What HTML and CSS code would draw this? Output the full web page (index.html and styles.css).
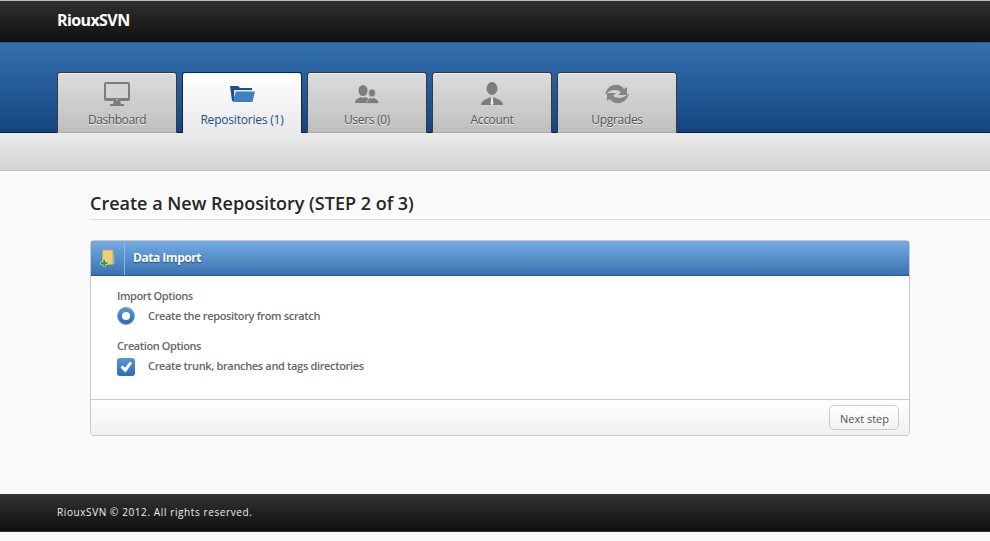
FILE: index.html
```html
<!DOCTYPE html>
<html lang="en">
<head>
<meta charset="utf-8">
<title>RiouxSVN</title>
<link rel="stylesheet" href="styles.css">
</head>
<body>
<header class="topbar"><div class="brand">RiouxSVN</div></header>
<nav class="nav">
  <a class="tab tab-tight">
    <svg class="ico" viewBox="0 0 26 24"><path fill="#7d7d7d" d="M2 0h22a2 2 0 0 1 2 2v15a2 2 0 0 1-2 2H2a2 2 0 0 1-2-2V2a2 2 0 0 1 2-2z"/><rect x="2" y="2" width="22" height="14" fill="#d4d4d4"/><path fill="#7d7d7d" d="M10 19h6l1 3h3v2H6v-2h3z"/><circle cx="13" cy="17.500" r=".8" fill="#ddd"/></svg>
    <span>Dashboard</span>
  </a>
  <a class="tab active">
    <svg class="ico" viewBox="0 0 26 24"><path fill="#1f4f86" d="M1 4h8l2 2h12v3H7L5 19H3z"/><path fill="#dfe8f2" d="M5 8h18v1.500H7L5 17z"/><path fill="#3f7fc4" d="M7 9.500h19L23.500 20H4z"/></svg>
    <span>Repositories (1)</span>
  </a>
  <a class="tab">
    <svg class="ico" viewBox="0 0 26 24"><ellipse cx="9" cy="8.500" rx="4.500" ry="5.500" fill="#7d7d7d"/><path fill="#7d7d7d" d="M1 21c0-4 4-5 6-6l2 1 2-1c2 1 6 2 6 6z"/><ellipse cx="18" cy="11" rx="3.500" ry="4" fill="#7d7d7d" stroke="#d0d0d0" stroke-width=".7"/><path fill="#7d7d7d" stroke="#d0d0d0" stroke-width=".7" d="M12.500 21.500c0-4 3-5 4-6l1.500 1 1.500-1c1.500 1 5.500 2 5.500 6z"/></svg>
    <span>Users (0)</span>
  </a>
  <a class="tab">
    <svg class="ico" viewBox="0 0 26 24"><ellipse cx="13" cy="6.500" rx="5.500" ry="6.500" fill="#7d7d7d"/><path fill="#7d7d7d" d="M2 23c0-4.500 5-5.500 8-7.500h6c3 2 8 3 8 7.500z"/><path fill="#eee" d="M11.800 15.500h2.400l-.4 2 .7 4-1.500 2.200-1.500-2.200.7-4z"/></svg>
    <span>Account</span>
  </a>
  <a class="tab">
    <svg class="ico" viewBox="0 0 26 24"><path fill="#858585" d="M1 13C2 6 8 2 14 3c3 .5 5 2 6 4l3-2v8h-9l3-3C13 7 6 7 1 13z"/><path fill="#858585" d="M25 11c-1 7-7 11-13 10-3-.5-5-2-6-4l-3 2v-8h9l-3 3c4 3 11 3 16-3z"/></svg>
    <span>Upgrades</span>
  </a>
</nav>
<div class="subbar"></div>
<main class="content">
  <h1 class="title">Create a New Repository (STEP 2 of 3)</h1>
  <section class="panel">
    <div class="panel-head">
      <span class="panel-ico">
        <svg viewBox="0 0 16 18" width="16" height="18"><path fill="#8fb3d0" d="M11 6h3.500v9H11z"/><rect x="2.500" y="1" width="10.500" height="14.500" rx="1" fill="#efcf72" stroke="#c8a650" stroke-width=".8"/><path fill="#2f9e2f" stroke="#e8f5e0" stroke-width=".5" d="M3 10.500h2.500v2.500H8v2.500H5.500V18H3v-2.500H.5V13H3z"/></svg>
      </span>
      <h2 class="panel-title">Data Import</h2>
    </div>
    <div class="panel-body">
      <div class="group">
        <div class="label">Import Options</div>
        <div class="opt"><span class="radio"></span><span class="opt-text">Create the repository from scratch</span></div>
      </div>
      <div class="group">
        <div class="label">Creation Options</div>
        <div class="opt"><span class="check"><svg viewBox="0 0 18 18" width="18" height="18"><path fill="#fff" d="M3.500 9.500l2.200-2.200 2.400 2.400L13 3.500l2 1.800L8.500 14.500z"/></svg></span><span class="opt-text">Create trunk, branches and tags directories</span></div>
      </div>
    </div>
    <div class="panel-foot"><button class="btn" type="button">Next step</button></div>
  </section>
</main>
<footer class="footer">RiouxSVN © 2012. All rights reserved.</footer>
<div class="tail"></div>
</body>
</html>
```

FILE: styles.css
```css
* { box-sizing: border-box; }
html, body { margin: 0; height: 541px; overflow: hidden; background: #fafafa; }
body { font-family: "Open Sans", "Noto Sans", sans-serif; color: #555; }
.topbar { height: 42px; padding-left: 57px; border-top: 1px solid #bbb; background: linear-gradient(#303030, #0f0f0f); }
.brand { font-size: 16px; font-weight: 700; line-height: 38px; color: #fff; letter-spacing: -.6px; }
.nav { height: 91px; padding: 29px 0 0 57px; display: flex; align-items: flex-start; gap: 5px; background: linear-gradient(#3470af, #144580); border-bottom: 1px solid #111c2c; border-top: 1px solid #2a5f9e; }
.tab { width: 120px; height: 61px; flex: none; display: flex; flex-direction: column; align-items: center; padding-top: 9px; border: 1px solid #3a3a3a; border-bottom: 1px solid #aaa; border-radius: 3px 3px 0 0; background: linear-gradient(#dcdcdc, #bfbfbf); box-shadow: inset 0 1px 0 #eee; font-size: 12px; color: #555; letter-spacing: -.3px; text-shadow: 0 1px 0 #eee; }
.tab-tight { letter-spacing: -.42px; }
.tab.active { background: linear-gradient(#fff, #e9e9e9); color: #1d4f88; border-color: #16273d; border-bottom: 0; letter-spacing: -.2px; }
.tab span { margin-top: 6px; line-height: 16px; }
.ico { width: 26px; height: 24px; display: block; }
.subbar { height: 38px; background: linear-gradient(#ebebeb, #d4d4d4); border-bottom: 1px solid #c4c4c4; }
.content { height: 323px; padding: 20px 0 0 90px; }
.title { margin: 0 0 20px; height: 29px; font-size: 18px; line-height: 24px; font-weight: 600; color: #262626; border-bottom: 1px solid #ddd; }
.panel { width: 820px; height: 196px; border: 1px solid #c8c8c8; border-radius: 4px; background: #fff; display: flex; flex-direction: column; overflow: hidden; }
.panel-head { height: 36px; margin: -1px -1px 0; display: flex; align-items: center; background: linear-gradient(#74abe4, #3a73b0); border: 1px solid #2a5a94; border-radius: 4px 4px 0 0; }
.panel-ico { width: 34px; height: 100%; display: flex; align-items: center; justify-content: center; border-right: 1px solid #8db5de; flex: none; }
.panel-title { margin: 0 0 2px 8px; font-size: 12px; font-weight: 700; color: #fff; text-shadow: 0 1px 1px #234f80; letter-spacing: -.47px; }
.panel-body { flex: 1; padding: 13px 26px 0; }
.group { margin-bottom: 12px; }
.label { font-size: 11px; line-height: 14px; font-weight: 600; color: #666; letter-spacing: -.4px; }
.opt { display: flex; align-items: center; height: 22px; margin-top: 2px; }
.opt-text { margin: -2px 0 0 13px; font-size: 11px; font-weight: 600; color: #666; letter-spacing: -.34px; }
.radio { width: 18px; height: 18px; border-radius: 50%; background: linear-gradient(#5b95d6, #2f6bb0); border: 1px solid #6f9fd6; display: flex; align-items: center; justify-content: center; flex: none; }
.radio::after { content: ""; width: 8px; height: 8px; border-radius: 50%; background: #fff; }
.check { width: 18px; height: 18px; margin-top: 2px; border-radius: 3px; background: linear-gradient(#5b95d6, #2f6bb0); flex: none; display: block; }
.check svg { display: block; }
.panel-foot { height: 36px; display: flex; align-items: center; justify-content: flex-end; padding-right: 10px; background: linear-gradient(#fff, #f0f0f0); border-top: 1px solid #ccc; }
.btn { width: 70px; height: 25px; padding: 1px 0 0 1px; border: 1px solid #ccc; border-radius: 5px; background: linear-gradient(#fff, #f2f2f2); font: 11px "Open Sans", sans-serif; color: #555; }
.footer { height: 38px; padding-left: 57px; line-height: 36px; font-size: 10px; color: #eee; letter-spacing: .6px; background: linear-gradient(#333, #0f0f0f); border-bottom: 1px solid #333; }
.tail { height: 9px; }
```
